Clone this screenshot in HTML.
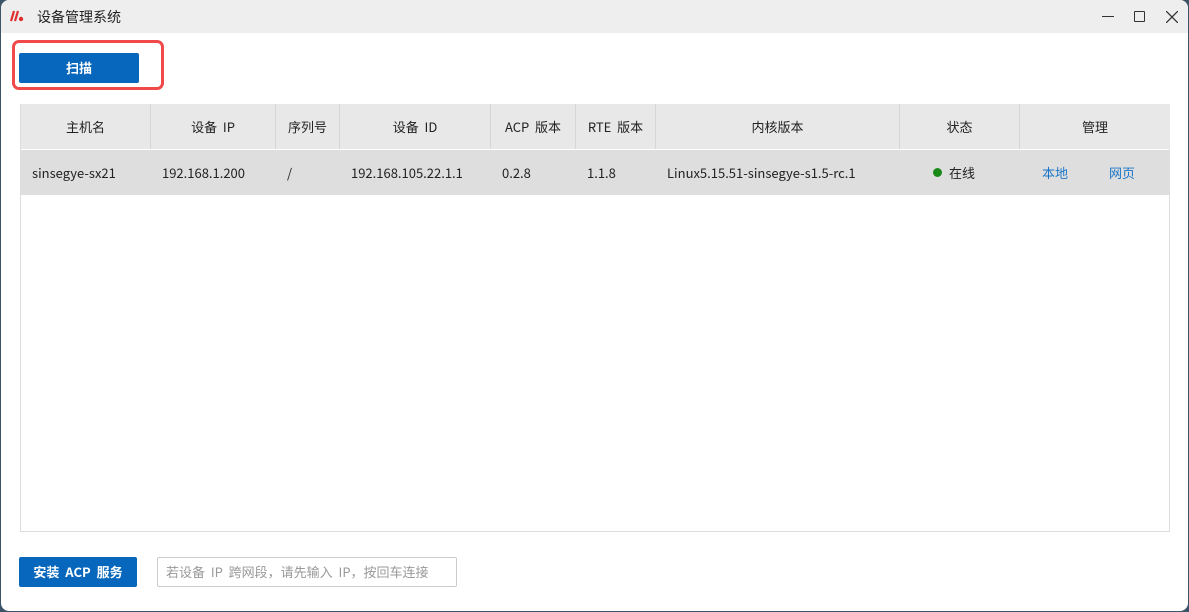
<!DOCTYPE html>
<html><head><meta charset="utf-8"><style>
*{margin:0;padding:0;box-sizing:border-box}
body{width:1189px;height:612px;background:#3d5368;font-family:"Noto Sans CJK SC","Liberation Sans",sans-serif;overflow:hidden;position:relative}
.win{position:absolute;left:1px;top:0;width:1187px;height:611px;background:#fff;border-radius:8px;overflow:hidden}
.tb{position:absolute;left:0;top:0;right:0;height:33px;background:#eeeeee}
.title{position:absolute;left:36px;top:7px;font-size:14px;color:#222}
.abs{position:absolute}
.redbox{position:absolute;left:11px;top:40px;width:152px;height:50px;border:3px solid #f0494a;border-radius:7px}
.btn{position:absolute;background:#0767bc;color:#fff;font-size:13px;font-weight:bold;text-align:center;border-radius:2px}
.tbl{position:absolute;left:19px;top:104px;width:1150px;height:428px;border:1px solid #ddd;border-top:none}
.hd,.rw{position:absolute;left:0;height:45px;width:1149px}
.hd{top:0;background:#e8e8e8}
.rw{top:46px;background:#dedede}
.c{position:absolute;top:0;height:45px;line-height:45px;font-size:13px;color:#222;white-space:nowrap}
.hd .c{text-align:center;border-right:1px solid #d6d6d6}
.rw .c{padding-left:11px}
.inp{position:absolute;left:156px;top:557px;width:300px;height:30px;border:1px solid #ccc;border-radius:2px;font-size:13px;color:#999;line-height:28px;padding-left:8px;white-space:nowrap}
</style></head><body>
<div class="win">
<div class="tb">
<svg class="abs" style="left:9px;top:10px" width="16" height="12" viewBox="0 0 16 12"><path d="M4 1L1 11M8 1L5 11" stroke="#e02f2f" stroke-width="2.2" fill="none"/><circle cx="11" cy="9" r="2.2" fill="#e02f2f"/></svg>
<div class="title">设备管理系统</div>
<div class="abs" style="left:1101px;top:16px;width:12px;height:1px;background:#333"></div>
<div class="abs" style="left:1133px;top:11px;width:11px;height:11px;border:1.3px solid #333;border-radius:1px"></div>
<svg class="abs" style="left:1165px;top:11px" width="12" height="12"><path d="M0 0L12 12M12 0L0 12" stroke="#333" stroke-width="1.3"/></svg>
</div>
<div class="redbox"></div>
<div class="btn" style="left:18px;top:53px;width:120px;height:30px;line-height:30px">扫描</div>
<div class="tbl">
<div class="hd">
<div class="c" style="left:0;width:130px">主机名</div>
<div class="c" style="left:130px;width:125px">设备&nbsp; IP</div>
<div class="c" style="left:255px;width:64px">序列号</div>
<div class="c" style="left:319px;width:151px">设备&nbsp; ID</div>
<div class="c" style="left:470px;width:85px">ACP&nbsp; 版本</div>
<div class="c" style="left:555px;width:80px">RTE&nbsp; 版本</div>
<div class="c" style="left:635px;width:244px">内核版本</div>
<div class="c" style="left:879px;width:120px">状态</div>
<div class="c" style="left:999px;width:150px;border-right:none">管理</div>
</div>
<div class="rw">
<div class="c" style="left:0">sinsegye-sx21</div>
<div class="c" style="left:130px">192.168.1.200</div>
<div class="c" style="left:255px">/</div>
<div class="c" style="left:319px">192.168.105.22.1.1</div>
<div class="c" style="left:470px">0.2.8</div>
<div class="c" style="left:555px">1.1.8</div>
<div class="c" style="left:635px">Linux5.15.51-sinsegye-s1.5-rc.1</div>
<div class="c" style="left:912px;padding-left:16px"><span style="position:absolute;left:0;top:18px;width:9px;height:9px;border-radius:50%;background:#198a1a"></span>在线</div>
<div class="c" style="left:1010px;color:#1b75c8">本地</div>
<div class="c" style="left:1077px;color:#1b75c8">网页</div>
</div>
</div>
<div class="btn" style="left:18px;top:557px;width:118px;height:30px;line-height:30px">安装&nbsp; ACP&nbsp; 服务</div>
<div class="inp">若设备&nbsp; IP&nbsp; 跨网段，请先输入&nbsp; IP，按回车连接</div>
</div>
</body></html>
